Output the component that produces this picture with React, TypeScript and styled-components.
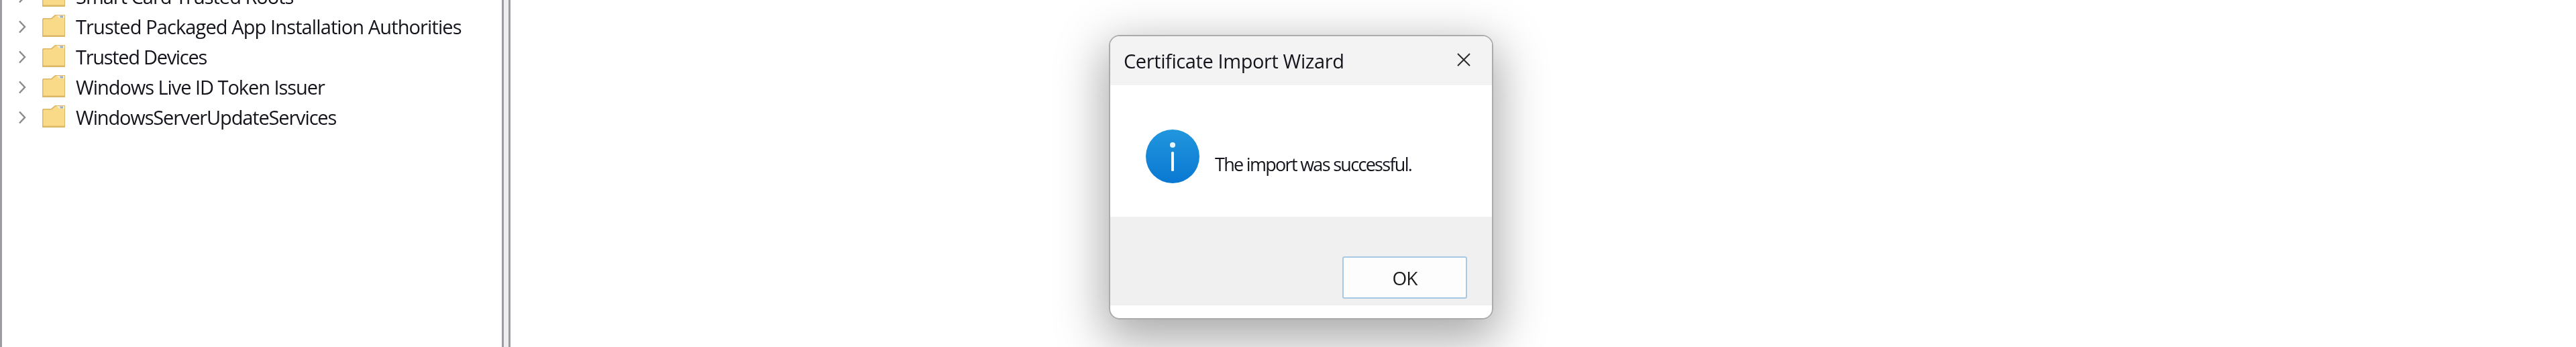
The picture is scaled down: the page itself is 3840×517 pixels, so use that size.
import React from "react";
import styled, { createGlobalStyle } from "styled-components";

const GlobalStyle = createGlobalStyle`
  html, body {
    margin: 0;
    padding: 0;
    width: 3840px;
    height: 517px;
    overflow: hidden;
    background: #ffffff;
  }
  #root {
    height: 517px;
  }
`;

const Page = styled.div`
  position: relative;
  display: flex;
  width: 3840px;
  height: 517px;
  overflow: hidden;
  background: #ffffff;
  border-left: 3px solid #9c9ca0;
  box-sizing: border-box;
  font-family: "Open Sans", "Noto Sans", sans-serif;
  color: #14141c;
`;

const TreePane = styled.div`
  width: 745px;
  flex: none;
  overflow: hidden;
`;

const TreeList = styled.ul`
  list-style: none;
  margin: -28px 0 0;
  padding: 0;
`;

const TreeRow = styled.li`
  display: flex;
  align-items: center;
  height: 45px;
  padding-left: 24px;
`;

const Chevron = styled.svg`
  width: 12px;
  height: 20px;
  flex: none;
  margin-right: 24px;
`;

const Folder = styled.svg`
  width: 35px;
  height: 33px;
  flex: none;
  margin-right: 15px;
  margin-top: -3px;
`;

const TreeLabel = styled.span<{ $tracking: number }>`
  font-size: 29px;
  letter-spacing: ${(props) => props.$tracking}px;
  white-space: nowrap;
  filter: blur(0.4px);
`;

const Splitter = styled.div`
  width: 7px;
  flex: none;
  box-sizing: content-box;
  background: #eeeef0;
  border-left: 3px solid #9c9ca0;
  border-right: 3px solid #9c9ca0;
`;

const ContentPane = styled.div`
  flex: 1;
  background: #ffffff;
`;

const Dialog = styled.div`
  position: absolute;
  left: 1650px;
  top: 52px;
  width: 569px;
  height: 420px;
  display: flex;
  flex-direction: column;
  overflow: hidden;
  background: #ffffff;
  border: 2px solid #ababab;
  border-radius: 16px;
  box-sizing: content-box;
`;

const DialogShadow = styled.div`
  position: absolute;
  left: 1650px;
  top: 52px;
  width: 573px;
  height: 424px;
  border-radius: 16px;
  box-shadow: 0 22px 70px 8px rgba(0, 0, 0, 0.34);
`;

const TitleBar = styled.div`
  display: flex;
  align-items: center;
  justify-content: space-between;
  height: 73px;
  flex: none;
  padding: 0 31px 0 20px;
  background: #f3f3f3;
  box-sizing: border-box;
`;

const Title = styled.span`
  font-size: 29px;
  letter-spacing: -0.4px;
  filter: blur(0.4px);
`;

const CloseIcon = styled.svg`
  width: 22px;
  height: 22px;
  flex: none;
  margin-bottom: 3px;
`;

const MessageArea = styled.div`
  display: flex;
  align-items: flex-start;
  height: 196px;
  flex: none;
  padding: 66px 0 0 53px;
  box-sizing: border-box;
  background: #ffffff;
`;

const InfoIcon = styled.svg`
  width: 80px;
  height: 80px;
  flex: none;
  margin-right: 23px;
`;

const Message = styled.span`
  margin-top: 33px;
  font-size: 27px;
  letter-spacing: -1.7px;
  white-space: nowrap;
  filter: blur(0.4px);
`;

const ButtonBar = styled.div`
  display: flex;
  justify-content: flex-end;
  align-items: flex-start;
  height: 132px;
  flex: none;
  padding: 59px 37px 0 0;
  box-sizing: border-box;
  background: #f0f0f0;
`;

const OkButton = styled.button`
  width: 186px;
  height: 63px;
  padding: 0;
  background: #fdfdfd;
  border: 2px solid #a8c9e4;
  border-radius: 3px;
  font-family: inherit;
  font-size: 28px;
  letter-spacing: -1px;
  color: #1c1c1c;
  box-sizing: border-box;
  filter: blur(0.3px);
`;

const folders = [
  { name: "Smart Card Trusted Roots", tracking: -1 },
  { name: "Trusted Packaged App Installation Authorities", tracking: -0.89 },
  { name: "Trusted Devices", tracking: -1.3 },
  { name: "Windows Live ID Token Issuer", tracking: -1.05 },
  { name: "WindowsServerUpdateServices", tracking: -1.15 },
];

function FolderGlyph() {
  return (
    <Folder viewBox="0 0 35 33">
      <path d="M0 7 Q0 5 2 5 L13 5 L19 0 L34 0 L34 33 L0 33 Z" fill="#dcb768" />
      <path
        d="M1.5 8 Q1.5 6.5 3 6.5 L14 6.5 L20 1.5 L33 1.5 L33 30.5 L1.5 30.5 Z"
        fill="#f8da88"
      />
      <path d="M21 1 L33 1 L33 5 L26 5 Z" fill="#f6efd6" />
      <path d="M26 1.5 L31 1.5 L31 4.5 L27 4.5 Z" fill="#9aaccb" />
    </Folder>
  );
}

export default function App() {
  return (
    <Page>
      <GlobalStyle />
      <TreePane>
        <TreeList>
          {folders.map((folder) => (
            <TreeRow key={folder.name}>
              <Chevron viewBox="0 0 12 20">
                <path
                  d="M2 1.5 L10 10 L2 18.5"
                  fill="none"
                  stroke="#8a8a8a"
                  strokeWidth="2.4"
                />
              </Chevron>
              <FolderGlyph />
              <TreeLabel $tracking={folder.tracking}>{folder.name}</TreeLabel>
            </TreeRow>
          ))}
        </TreeList>
      </TreePane>
      <Splitter />
      <ContentPane />
      <DialogShadow />
      <Dialog>
        <TitleBar>
          <Title>Certificate Import Wizard</Title>
          <CloseIcon viewBox="0 0 22 22">
            <path
              d="M2 2 L20 20 M20 2 L2 20"
              stroke="#2a2a2a"
              strokeWidth="2"
              fill="none"
            />
          </CloseIcon>
        </TitleBar>
        <MessageArea>
          <InfoIcon viewBox="0 0 80 80">
            <defs>
              <linearGradient id="infoFill" x1="0" y1="0" x2="0" y2="1">
                <stop offset="0" stopColor="#2196dd" />
                <stop offset="1" stopColor="#0a78d2" />
              </linearGradient>
            </defs>
            <circle cx="40" cy="40" r="40" fill="url(#infoFill)" />
            <circle cx="40" cy="23" r="4" fill="#eaf5fc" />
            <rect x="38" y="33" width="4" height="29" rx="1.5" fill="#f4fafd" />
          </InfoIcon>
          <Message>The import was successful.</Message>
        </MessageArea>
        <ButtonBar>
          <OkButton>OK</OkButton>
        </ButtonBar>
      </Dialog>
    </Page>
  );
}
